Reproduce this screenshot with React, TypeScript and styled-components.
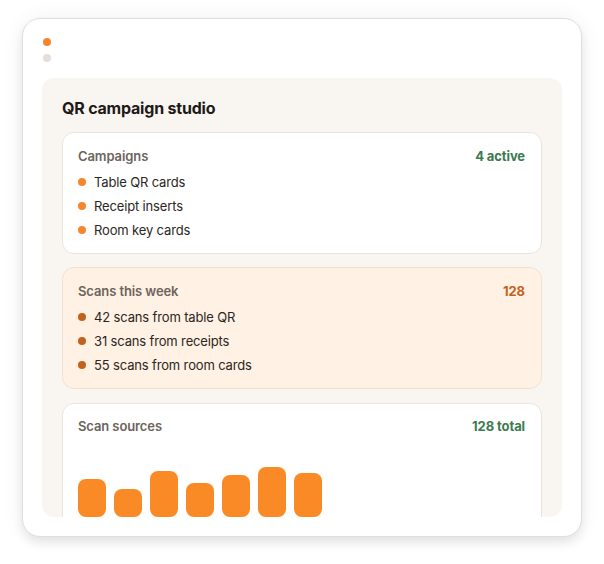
import styled, { createGlobalStyle } from 'styled-components';

const GlobalStyle = createGlobalStyle`
  html, body {
    margin: 0;
    padding: 0;
    background: #ffffff;
  }
  body {
    font-family: "Inter", "Noto Sans", sans-serif;
    -webkit-font-smoothing: antialiased;
  }
`;

type Tone = 'plain' | 'warm';

const campaigns = ['Table QR cards', 'Receipt inserts', 'Room key cards'];
const scans = ['42 scans from table QR', '31 scans from receipts', '55 scans from room cards'];
const bars = [38, 28, 46, 34, 42, 50, 44];

const App = () => {
  return (
    <>
      <GlobalStyle />
      <Page>
        <Shell>
          <Dots>
            <Dot $active />
            <Dot />
          </Dots>
          <Panel>
            <Title>QR campaign studio</Title>
            <Stack>
              <Card $tone="plain">
                <CardHead>
                  <Label>Campaigns</Label>
                  <Stat $color="#3c7b4f">4 active</Stat>
                </CardHead>
                <List>
                  {campaigns.map((c) => (
                    <Item key={c} $bullet="#f5862b">{c}</Item>
                  ))}
                </List>
              </Card>

              <Card $tone="warm">
                <CardHead>
                  <Label>Scans this week</Label>
                  <Stat $color="#c4621d">128</Stat>
                </CardHead>
                <List>
                  {scans.map((s) => (
                    <Item key={s} $bullet="#c4621d">{s}</Item>
                  ))}
                </List>
              </Card>

              <ChartCard $tone="plain">
                <CardHead>
                  <Label>Scan sources</Label>
                  <Stat $color="#3c7b4f">128 total</Stat>
                </CardHead>
                <Chart>
                  {bars.map((h, i) => (
                    <Bar key={i} style={{ height: h }} />
                  ))}
                </Chart>
              </ChartCard>
            </Stack>
          </Panel>
        </Shell>
      </Page>
    </>
  );
};

export default App;

const Page = styled.div`
  padding: 18px 22px;
`;

const Shell = styled.div`
  width: 560px;
  box-sizing: border-box;
  padding: 19px;
  background: #ffffff;
  border-radius: 18px;
  border: 1px solid #e4ded8;
  box-shadow: 0 6px 10px rgba(0, 0, 0, 0.08), 0 0 22px rgba(0, 0, 0, 0.06);
`;

const Dots = styled.div`
  display: flex;
  flex-direction: column;
  gap: 8px;
  padding-left: 1px;
  margin-bottom: 16px;
`;

const Dot = styled.span<{ $active?: boolean }>`
  width: 8px;
  height: 8px;
  border-radius: 50%;
  background: ${(p) => (p.$active ? '#f5862b' : '#e6ded7')};
`;

const Panel = styled.div`
  height: 439px;
  box-sizing: border-box;
  padding: 19px 20px 0;
  background: #f9f6f2;
  border-radius: 12px;
  overflow: hidden;
`;

const Title = styled.h1`
  margin: 0 0 13px;
  font-size: 16px;
  line-height: 22px;
  font-weight: 700;
  color: #1f1a17;
  letter-spacing: -0.2px;
`;

const Stack = styled.div`
  display: flex;
  flex-direction: column;
  gap: 13px;
`;

const Card = styled.div<{ $tone: Tone }>`
  box-sizing: border-box;
  padding: 13px 16px 13px 15px;
  border-radius: 12px;
  border: 1px solid ${(p) => (p.$tone === 'warm' ? '#f0e1d4' : '#ebe4dc')};
  background: ${(p) => (p.$tone === 'warm' ? '#fff1e4' : '#ffffff')};
`;

const ChartCard = styled(Card)`
  margin-top: 1px;
  padding-top: 12px;
`;

const CardHead = styled.div`
  display: flex;
  align-items: center;
  justify-content: space-between;
  height: 20px;
`;

const Label = styled.span`
  font-size: 13px;
  font-weight: 600;
  color: #6d645d;
  letter-spacing: -0.1px;
`;

const Stat = styled.span<{ $color: string }>`
  font-size: 13px;
  font-weight: 700;
  color: ${(p) => p.$color};
  letter-spacing: -0.1px;
`;

const List = styled.ul`
  list-style: none;
  margin: 6px 0 0;
  padding: 0;
  display: flex;
  flex-direction: column;
  gap: 4px;
`;

const Item = styled.li<{ $bullet: string }>`
  display: flex;
  align-items: center;
  gap: 8px;
  height: 20px;
  font-size: 13px;
  color: #2c2622;
  letter-spacing: -0.15px;

  &::before {
    content: '';
    width: 8px;
    height: 8px;
    border-radius: 50%;
    background: ${(p) => p.$bullet};
    flex-shrink: 0;
  }
`;

const Chart = styled.div`
  display: flex;
  align-items: flex-end;
  gap: 8px;
  height: 58px;
  margin-top: 23px;
`;

const Bar = styled.div`
  width: 28px;
  border-radius: 8px;
  background: #f98a26;
`;
